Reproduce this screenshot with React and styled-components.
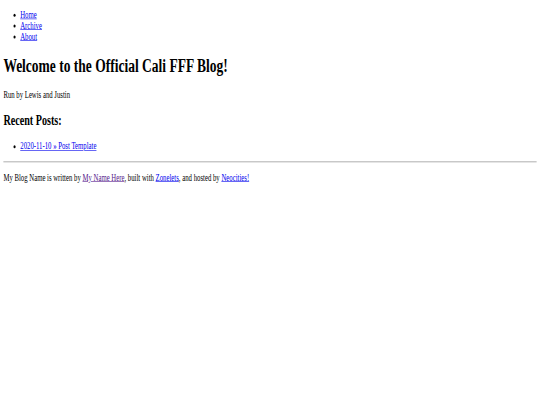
import styled, { createGlobalStyle } from 'styled-components'

const Global = createGlobalStyle`
  html, body {
    margin: 0;
    padding: 0;
    overflow: hidden;
    background: #fff;
  }
`

// the reference is a 1280x675 page squeezed into 540x405
const Page = styled.div`
  display: flow-root;
  width: 1280px;
  box-sizing: border-box;
  padding: 0 8px 8px;
  transform-origin: 0 0;
  transform: scale(0.421875, 0.6);
  font-family: "Liberation Serif", "Times New Roman", serif;
  font-size: 16px;
  color: #000;
`

const List = styled.ul`
  margin: 16px 0;
  padding-left: 40px;
  list-style: disc;
`

const Title = styled.h1`
  font-size: 32px;
  font-weight: bold;
  margin: 21.44px 0;
`

const SubTitle = styled.h2`
  font-size: 24px;
  font-weight: bold;
  margin: 19.92px 0;
`

const Text = styled.p`
  margin: 16px 0;
`

const Rule = styled.hr`
  margin: 8px 0;
  height: 0;
  border: 0;
  border-top: 1px solid #a4a4a4;
  border-bottom: 1px solid #d4d4d4;
`

const Link = styled.a`
  color: ${p => (p.$visited ? '#551a8b' : '#0000ee')};
  text-decoration: underline;
  cursor: pointer;
`

const nav = ['Home', 'Archive', 'About']

const App = () => (
  <>
    <Global />
    <Page>
      <List>
        {nav.map(n => (
          <li key={n}><Link href="#">{n}</Link></li>
        ))}
      </List>
      <Title>Welcome to the Official Cali FFF Blog!</Title>
      <Text>Run by Lewis and Justin</Text>
      <SubTitle>Recent Posts:</SubTitle>
      <List>
        <li><Link href="#">2020-11-10 » Post Template</Link></li>
      </List>
      <Rule />
      <Text>
        My Blog Name is written by <Link href="#" $visited>My Name Here</Link>, built
        with <Link href="#">Zonelets</Link>, and hosted by <Link href="#">Neocities!</Link>
      </Text>
    </Page>
  </>
)

export default App
